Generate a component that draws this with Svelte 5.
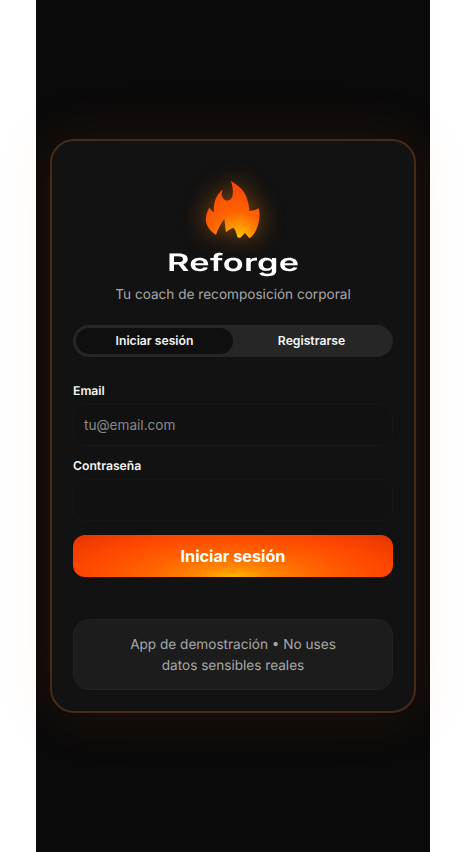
<script>
  let email = $state('');
  let password = $state('');
  let mode = $state('login');
</script>

<div class="frame">
  <form class="card" onsubmit={(e) => e.preventDefault()}>
    <header class="brand">
      <svg class="flame" viewBox="0 0 60 64" width="60" height="64" aria-hidden="true">
        <defs>
          <radialGradient id="fire" gradientUnits="userSpaceOnUse" cx="35" cy="60" r="60">
            <stop offset="0" stop-color="#ffc800" />
            <stop offset="0.2" stop-color="#ff9c00" />
            <stop offset="0.45" stop-color="#ff6400" />
            <stop offset="1" stop-color="#f5400a" />
          </radialGradient>
        </defs>
        <path
          fill="url(#fire)"
          d="M27.7 1.7C35 6 41 11 43.5 18.5C45.5 23.5 46 28 46.3 31.7C49.5 32 53 31 55.7 29.3C56.8 33 56.8 36.5 56.3 40C55.6 45 54 50 52 53.3C50.5 56 48.5 58 46.3 59.3L42 54L37 59L34.3 58.3C33.5 54 32.5 51 30.3 48.7C28 49.5 25.5 51 23 53.3C22 48.5 22 44 21.3 40C18 44 15 50 13 56C9.5 53.5 6 50.5 4.3 46.7C3 44 2.6 41 3 38.3C3.4 35 4.6 31.5 6.3 28.7C7.6 30.5 9 32 11 33.3C10.8 29 11 25.5 12 21.7C13.5 17 16.5 13 20.3 10C18.5 13 18.5 16 19 17C20 20 22 21.5 24 21.5C27 21.5 29 19.5 29.5 17C30.5 12 29.5 6 27.7 1.7Z"
        />
      </svg>
      <h1>Reforge</h1>
      <p>Tu coach de recomposición corporal</p>
    </header>

    <div class="tabs">
      <button type="button" class="tab" class:active={mode === 'login'} onclick={() => (mode = 'login')}>Iniciar sesión</button>
      <button type="button" class="tab" class:active={mode === 'signup'} onclick={() => (mode = 'signup')}>Registrarse</button>
    </div>

    <label class="field">
      <span>Email</span>
      <input type="email" placeholder="tu@email.com" bind:value={email} />
    </label>

    <label class="field second">
      <span>Contraseña</span>
      <input type="password" bind:value={password} />
    </label>

    <button class="submit" type="submit">Iniciar sesión</button>

    <div class="note">App de demostración • No uses<br />datos sensibles reales</div>
  </form>
</div>

<style>
  :global(body) {
    margin: 0;
    background: #fff;
    font-family: Inter, "Liberation Sans", sans-serif;
    text-rendering: geometricPrecision;
  }

  .frame {
    width: 394px;
    min-height: 852px;
    margin-left: 36px;
    background: #0a0a0a;
    display: flex;
    align-items: center;
    justify-content: center;
  }

  .card {
    box-sizing: border-box;
    flex: none;
    width: 366px;
    height: 574px;
    padding: 38px 21px 21px;
    display: flex;
    flex-direction: column;
    background: #121212;
    border: 2px solid #472a17;
    border-radius: 24px;
    box-shadow: 0 0 60px rgba(255, 106, 0, 0.1);
  }

  .brand,
  .tabs,
  .field,
  .submit,
  .note {
    flex: none;
  }

  .brand {
    display: flex;
    flex-direction: column;
    align-items: center;
  }

  .flame {
    display: block;
    filter: drop-shadow(0 0 12px rgba(255, 125, 0, 0.5));
  }

  h1 {
    margin: 5px 0 0;
    font-size: 24px;
    line-height: 30px;
    font-weight: 600;
    color: #fff;
    transform: scaleX(1.43);
    letter-spacing: 0.2px;
  }

  .brand p {
    margin: 6px 0 0;
    font-size: 13.6px;
    line-height: 22px;
    color: #a8a8a8;
  }

  .tabs {
    margin-top: 19px;
    height: 32px;
    box-sizing: border-box;
    padding: 3px;
    display: grid;
    grid-template-columns: 157px 1fr;
    background: #262626;
    border-radius: 16px;
  }

  .tab {
    border: 0;
    padding: 0;
    background: transparent;
    border-radius: 13px;
    color: #f5f5f5;
    font: 600 12.2px/26px Inter, sans-serif;
    cursor: pointer;
  }

  .tab.active {
    background: #0f0f0f;
  }

  .field {
    display: block;
    margin-top: 26px;
  }

  .field.second {
    margin-top: 12px;
  }

  .field span {
    display: block;
    margin-bottom: 6px;
    font-size: 12.2px;
    line-height: 15px;
    font-weight: 600;
    color: #f5f5f5;
  }

  input {
    display: block;
    box-sizing: border-box;
    width: 100%;
    height: 42px;
    padding: 0 10px;
    background: #111;
    border: 1px solid #171717;
    border-radius: 12px;
    color: #f5f5f5;
    font: 400 13.6px Inter, sans-serif;
    outline: none;
  }

  input::placeholder {
    color: #8a8a8a;
    opacity: 1;
  }

  .submit {
    margin-top: 14px;
    height: 42px;
    border: 0;
    border-radius: 12px;
    color: #fff;
    font: 700 16.2px Inter, sans-serif;
    background: radial-gradient(ellipse 78% 165% at 50% 100%, #ffb800 0%, #ff8800 14%, #ff6400 34%, #ff4800 60%, #ee3a02 80%, #c42c06 100%);
    cursor: pointer;
  }

  .note {
    margin-top: 42px;
    padding: 15px 16px 13px;
    background: #1c1c1c;
    border: 1px solid #222;
    border-radius: 16px;
    text-align: center;
    font-size: 13.6px;
    line-height: 20.5px;
    color: #a8a8a8;
  }
</style>
